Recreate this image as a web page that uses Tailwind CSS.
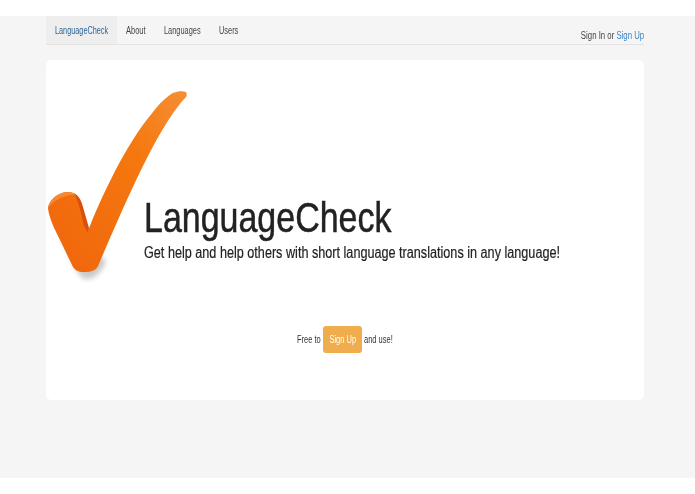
<!DOCTYPE html>
<html lang="en">
<head>
  <meta charset="UTF-8" />
  <meta name="viewport" content="width=device-width, initial-scale=1.0" />
  <title>LanguageCheck</title>
  <script src="https://cdn.jsdelivr.net/npm/@tailwindcss/browser@4"></script>
</head>
<body class="bg-white font-['Liberation_Sans',Arial,sans-serif] h-[494px] overflow-hidden">
  <div class="mt-4 h-[462px] bg-[#f5f5f5] pl-[46px] pr-[51px]">
    <!-- Navbar: the screenshot is squeezed sideways, so text carries scale-x -->
    <nav class="h-[29px] flex items-stretch justify-between border-b border-[#e3e3e3] text-[10px] text-[#444]">
      <ul class="flex items-stretch">
        <li class="w-[71px] pl-[9px] bg-[#eeeeee] flex items-center text-[#2f6497]"><a href="#" class="whitespace-nowrap origin-left scale-x-[0.73]">LanguageCheck</a></li>
        <li class="ml-[9px] w-[20px] flex items-center"><a href="#" class="origin-left scale-x-[0.75]">About</a></li>
        <li class="ml-[18px] w-[37px] flex items-center"><a href="#" class="origin-left scale-x-[0.74]">Languages</a></li>
        <li class="ml-[18px] w-[19px] flex items-center"><a href="#" class="origin-left scale-x-[0.74]">Users</a></li>
      </ul>
      <p class="pt-[12px] whitespace-nowrap origin-right scale-x-[0.78]">Sign In or <a href="#" class="text-[#3b84c4]">Sign Up</a></p>
    </nav>

    <!-- Hero -->
    <main class="relative mt-[15px] h-[340px] bg-white rounded-[5px] flex flex-col">
      <svg class="absolute left-0 top-[20px]" width="150" height="205" viewBox="46 80 150 205" aria-hidden="true">
        <defs>
          <linearGradient id="face" x1="0" y1="1" x2="1" y2="0">
            <stop offset="0" stop-color="#f0650c" />
            <stop offset="0.65" stop-color="#f5780f" />
            <stop offset="1" stop-color="#f58f35" />
          </linearGradient>
          <filter id="blur" x="-30%" y="-30%" width="160%" height="160%"><feGaussianBlur stdDeviation="2.5" /></filter>
        </defs>
        <path d="M64 240 Q74 272 84 279 Q98 280 106 262 L100 255 L70 230 Z" fill="#888" opacity="0.45" filter="url(#blur)" />
        <path d="M48 208 C49 200 58 192 68 192 C74 192 79 195 82 205 L88 231 C100 200 125 145 153 112 C160 103 166 97 173 93 C178 91 183 91 186 92 C187 94 187 96 186 97 C160 125 135 180 98 266 C96 270 92 272 84 272 C78 272 75 270 73 267 L60 240 C54 228 49 218 48 208 Z" fill="url(#face)" />
        <path d="M74 193 C79 196 81 200 83 207 L89 228 L88 233 L84 226 C81 212 78 200 74 193 Z" fill="#d9500a" />
        <path d="M48 208 C49 200 58 192 68 192 C72 192 74 193 76 195 C66 194 56 199 48 208 Z" fill="#f58a35" />
      </svg>

      <div class="ml-[98px] mt-[131px] h-[53px] flex items-center">
        <h1 class="text-[43px] leading-none text-[#222] [-webkit-text-stroke:0.5px_#222] whitespace-nowrap origin-left scale-x-[0.79]">LanguageCheck</h1>
      </div>
      <p class="ml-[98px] mt-[-1px] text-[16px] leading-[20px] text-[#222] [-webkit-text-stroke:0.2px_#222] whitespace-nowrap origin-left scale-x-[0.79]">Get help and help others with short language translations in any language!</p>

      <div class="mt-[63px] ml-[251px] flex items-center text-[10px] text-[#333]">
        <span class="w-[26px] whitespace-nowrap origin-left scale-x-[0.75]">Free to</span>
        <a href="#" class="w-[39px] h-[27px] bg-[#f0ad4e] rounded-[3px] text-white flex items-center justify-center whitespace-nowrap"><span class="scale-x-[0.75]">Sign Up</span></a>
        <span class="ml-[2px] whitespace-nowrap origin-left scale-x-[0.75]">and use!</span>
      </div>
    </main>
  </div>
</body>
</html>
